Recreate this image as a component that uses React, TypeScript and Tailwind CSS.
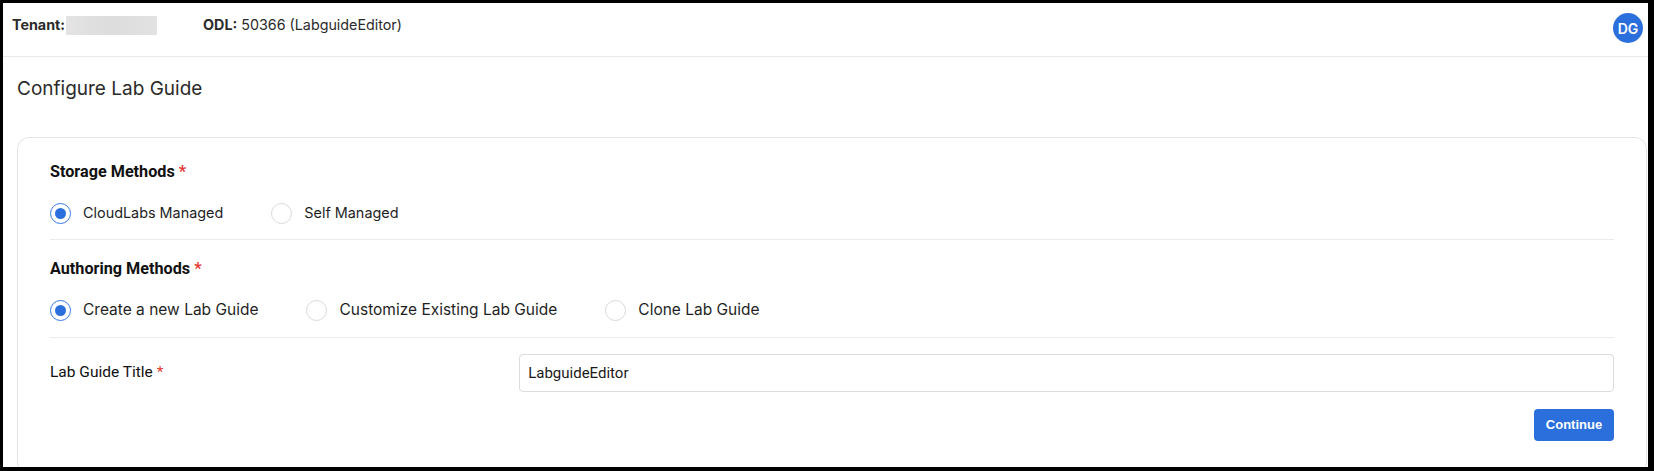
import React from "react";

function Radio({ label, checked, small }: { label: string; checked?: boolean; small?: boolean }) {
  return (
    <label className="flex items-center gap-3 cursor-pointer">
      <span
        className={
          checked
            ? "w-[21px] h-[21px] rounded-full border-[1.5px] border-[#3478e6] flex items-center justify-center bg-white"
            : "w-[21px] h-[21px] rounded-full border border-[#d9d9d9] bg-white"
        }
      >
        {checked && <span className="w-[11px] h-[11px] rounded-full bg-[#2a6fdb]" />}
      </span>
      <span
        className={
          small
            ? "text-[14.4px] leading-[24px] text-[#1f1f1f] font-[family-name:Inter,sans-serif]"
            : "text-[15.5px] leading-[24px] text-[#1f1f1f] font-[family-name:Inter,sans-serif]"
        }
      >
        {label}
      </span>
    </label>
  );
}

export default function App() {
  return (
    <div className="w-[1654px] h-[471px] box-border overflow-hidden bg-white border-black border-t-[3px] border-l-[3px] border-r-[6px] border-b-[4px]">
      <header className="h-[54px] border-b border-[#e9e9e9] pl-[9px] pr-[5px] flex items-start justify-between">
        <div className="mt-[7px] h-[30px] flex items-center text-[14.3px] text-[#2b2b2b] font-[family-name:Inter,sans-serif]">
          <span className="font-bold">Tenant:</span>
          <span className="ml-[1px] w-[91px] h-[19px] bg-gradient-to-r from-[#e4e4e4] via-[#dcdcdc] to-[#e2e2e2]" />
          <span className="ml-[46px] font-bold">ODL:</span>
          <span className="ml-[4px]">50366 (LabguideEditor)</span>
        </div>
        <div className="mt-[10px] w-[30px] h-[30px] rounded-full bg-[#2a6fdb] text-white text-[14px] font-semibold flex items-center justify-center font-[family-name:Inter,sans-serif]">
          DG
        </div>
      </header>
      <main className="pl-[14px] pr-[1px]">
        <h1 className="mt-[18px] text-[19px] leading-[28px] text-[#2b2b2b] font-normal font-[family-name:Inter,sans-serif]">
          Configure Lab Guide
        </h1>
        <div className="mt-[34px] border border-[#e3e3e3] rounded-[12px] px-8 pb-8 font-[family-name:Roboto,sans-serif]">
          <div className="pt-[22px] text-[16.2px] leading-[24px] font-bold text-[#111]">
            Storage Methods <span className="text-[#e53935]">*</span>
          </div>
          <div className="mt-[17px] flex items-center gap-12">
            <Radio label="CloudLabs Managed" checked small />
            <Radio label="Self Managed" small />
          </div>
          <div className="mt-[14px] h-px bg-[#ebebeb]" />
          <div className="mt-[17px] text-[16.2px] leading-[24px] font-bold text-[#111]">
            Authoring Methods <span className="text-[#e53935]">*</span>
          </div>
          <div className="mt-[17px] flex items-center gap-12">
            <Radio label="Create a new Lab Guide" checked />
            <Radio label="Customize Existing Lab Guide" />
            <Radio label="Clone Lab Guide" />
          </div>
          <div className="mt-[15px] h-px bg-[#ebebeb]" />
          <div className="mt-[16px] flex items-center">
            <div className="w-[30%] text-[15.5px] text-[#111] font-normal">
              Lab Guide Title <span className="text-[#e53935]">*</span>
            </div>
            <div className="flex-1 h-[38px] border border-[#dcdcdc] rounded-[4px] flex items-center px-[8px] text-[15px] text-[#1a1a1a]">
              LabguideEditor
            </div>
          </div>
          <div className="mt-[17px] flex justify-end">
            <button className="h-[32px] w-[80px] rounded-[4px] bg-[#2a6fdb] text-white text-[13px] font-bold font-[family-name:'Liberation_Sans',Arial,sans-serif]">
              Continue
            </button>
          </div>
        </div>
      </main>
    </div>
  );
}
